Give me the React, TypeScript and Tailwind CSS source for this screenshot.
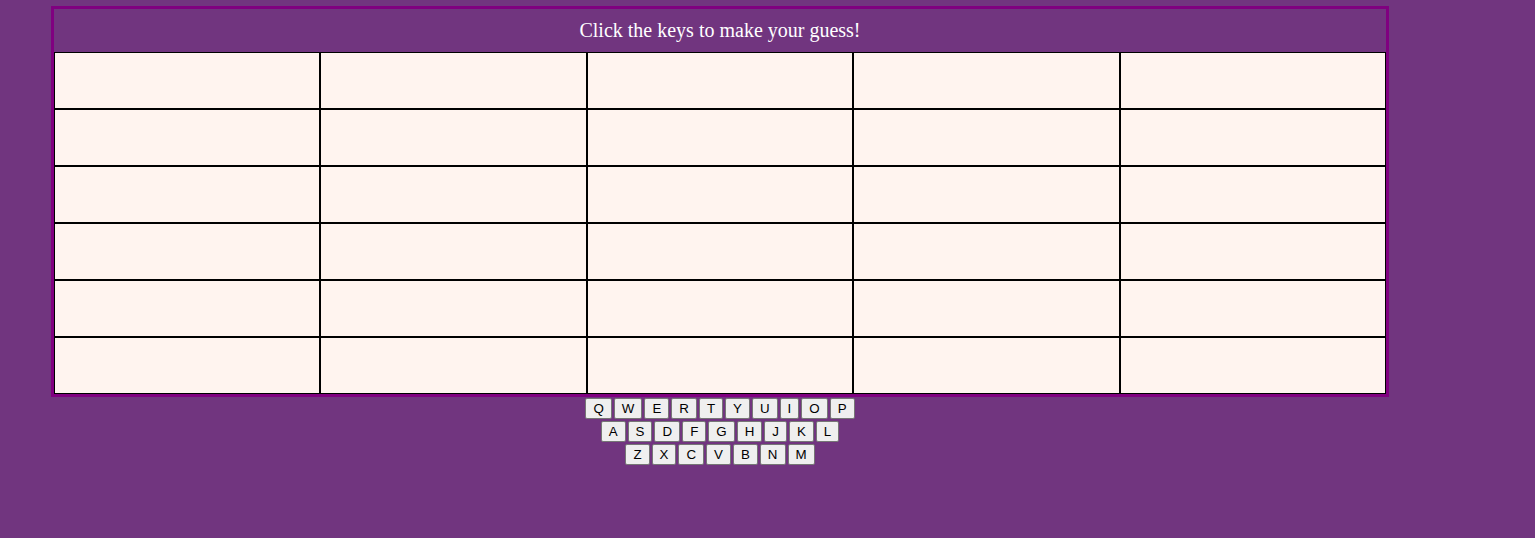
import React from "react";

const rows = ["QWERTYUIOP", "ASDFGHJKL", "ZXCVBNM"];

export default function App() {
  return (
    <div className="min-h-[538px] w-full bg-[#71357f] pt-[6px]">
      <div className="ml-[51px] w-[1338px] border-[3px] border-[#800080]">
        <div
          className="flex h-[43px] items-center justify-center pb-[1px] text-[20px] text-white"
          style={{ fontFamily: '"Liberation Serif", "Times New Roman", serif' }}
        >
          Click the keys to make your guess!
        </div>
        <div className="grid grid-cols-5">
          {Array.from({ length: 30 }).map((_, i) => (
            <div key={i} className="h-[57px] border border-black bg-[#fff4ef]" />
          ))}
        </div>
      </div>
      <div
        className="ml-[51px] flex w-[1338px] flex-col items-center gap-[2px] pt-[1px]"
        style={{ fontFamily: '"Liberation Sans", Arial, sans-serif' }}
      >
        {rows.map((r) => (
          <div key={r} className="flex gap-[2px]">
            {r.split("").map((k) => (
              <button
                key={k}
                className="rounded-[2px] border border-[#767676] bg-[#efefef] px-[7px] py-[2px] text-[13.333px] leading-[15px] text-black"
              >
                {k}
              </button>
            ))}
          </div>
        ))}
      </div>
    </div>
  );
}
